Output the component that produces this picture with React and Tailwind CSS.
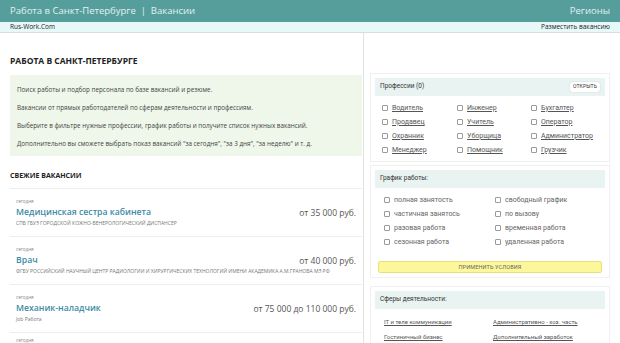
import React from 'react';

const professions = [
  ['Водитель', 'Инженер', 'Бухгалтер'],
  ['Продавец', 'Учитель', 'Оператор'],
  ['Охранник', 'Уборщица', 'Администратор'],
  ['Менеджер', 'Помощник', 'Грузчик'],
];

const schedule = [
  ['полная занятость', 'свободный график'],
  ['частичная занятось', 'по вызову'],
  ['разовая работа', 'временная работа'],
  ['сезонная работа', 'удаленная работа'],
];

const spheres = [
  ['IT и теле коммуникации', 'Административно - хоз. часть'],
  ['Гостиничный бизнес', 'Дополнительный заработок'],
];

const vacancies = [
  { title: 'Медицинская сестра кабинета', price: 'от 35 000 руб.', company: 'СПБ ГБУЗ ГОРОДСКОЙ КОЖНО-ВЕНЕРОЛОГИЧЕСКИЙ ДИСПАНСЕР' },
  { title: 'Врач', price: 'от 40 000 руб.', company: 'ФГБУ РОССИЙСКИЙ НАУЧНЫЙ ЦЕНТР РАДИОЛОГИИ И ХИРУРГИЧЕСКИХ ТЕХНОЛОГИЙ ИМЕНИ АКАДЕМИКА А.М.ГРАНОВА МЗ РФ' },
  { title: 'Механик-наладчик', price: 'от 75 000 до 110 000 руб.', company: 'Job Работа' },
];

function Box() {
  return <span className="inline-block h-[6px] w-[6px] shrink-0 rounded-[1px] border border-[#9a9a9a] bg-white" />;
}

function SectionHead({ children, button }) {
  return (
    <div className="flex h-[18px] items-center justify-between bg-[#e9f3f1] px-[5px] text-[6.5px] text-[#333]">
      <span>{children}</span>
      {button && (
        <span className="rounded-[2px] bg-white px-[3px] py-[1px] text-[5px] tracking-wide text-[#333] shadow-[0_0_1px_rgba(0,0,0,0.3)]">
          {button}
        </span>
      )}
    </div>
  );
}

export default function App() {
  return (
    <div className="h-screen w-full overflow-hidden bg-white font-['Open_Sans',sans-serif]">
      {/* top bar */}
      <div className="flex h-[22px] items-center justify-between bg-[#559e9c] px-[10px] text-[9.5px] text-[#e2f1f1]">
        <span>Работа в Санкт-Петербурге&nbsp;&nbsp;|&nbsp;&nbsp;Вакансии</span>
        <span>Регионы</span>
      </div>
      <div className="flex h-[11px] items-center justify-between border-b border-[#d6dede] bg-[#e6f9f8] px-[10px] text-[6.5px] text-[#222]">
        <span>Rus-Work.Com</span>
        <span>Разместить вакансию</span>
      </div>

      <div className="flex">
        {/* left column */}
        <div className="w-[363px] shrink-0 pl-[10px] pr-[1px]">
          <h1 className="mt-[23px] text-[8.5px] font-bold leading-[10px] text-[#222]">РАБОТА В САНКТ-ПЕТЕРБУРГЕ</h1>
          <div className="mt-[9px] flex flex-col gap-[8px] bg-[#eef7ea] px-[7px] pb-[7px] pt-[10px] text-[6.3px] leading-[10px] text-[#444]">
            <p>Поиск работы и подбор персонала по базе вакансий и резюме.</p>
            <p>Вакансии от прямых работодателей по сферам деятельности и профессиям.</p>
            <p>Выберите в фильтре нужные профессии, график работы и получите список нужных вакансий.</p>
            <p>Дополнительно вы сможете выбрать показ вакансий "за сегодня", "за 3 дня", "за неделю" и т. д.</p>
          </div>
          <h2 className="mt-[15px] text-[7px] font-bold leading-[10px] text-[#222]">СВЕЖИЕ ВАКАНСИИ</h2>
          <div className="mt-[7px]">
            {vacancies.map((v) => (
              <div key={v.title} className="border-t border-[#eeeeee] px-[6px] pb-[10px] pt-[10px]">
                <div className="text-[4.6px] leading-[5px] text-[#888]">сегодня</div>
                <div className="mt-[2px] flex h-[14px] items-center justify-between">
                  <span className="text-[8.7px] font-semibold text-[#3d8ba6]">{v.title}</span>
                  <span className="text-[8.5px] text-[#555]">{v.price}</span>
                </div>
                <div className="h-[6px] whitespace-nowrap text-[5px] leading-[6px] text-[#777]">{v.company}</div>
              </div>
            ))}
            <div className="border-t border-[#eeeeee] px-[6px] pt-[5px]">
              <div className="text-[4.6px] leading-[5px] text-[#888]">сегодня</div>
            </div>
          </div>
        </div>

        {/* right column */}
        <div className="flex-1 border-l border-[#e2e2e2] pl-[6px] pr-[10px] pt-[40px] font-['Roboto',sans-serif]">
          <div className="border border-[#f0f0f0] p-[4px]">
            <SectionHead button="ОТКРЫТЬ">Профессии (0)</SectionHead>
            <div className="mt-[5px]">
              {professions.map((row, i) => (
                <div key={i} className="grid h-[14px] grid-cols-[75px_74px_1fr] items-center pl-[7px] text-[7px] text-[#555]">
                  {row.map((p) => (
                    <span key={p} className="flex items-center gap-[4px]">
                      <Box />
                      <span className="underline">{p}</span>
                    </span>
                  ))}
                </div>
              ))}
            </div>
          </div>

          <div className="mt-[3px] border border-[#f0f0f0] p-[4px]">
            <SectionHead>График работы:</SectionHead>
            <div className="mt-[5px]">
              {schedule.map((row, i) => (
                <div key={i} className="grid h-[14px] grid-cols-[111px_1fr] items-center pl-[9px] text-[7px] text-[#666]">
                  {row.map((s) => (
                    <span key={s} className="flex items-center gap-[4px]">
                      <Box />
                      <span>{s}</span>
                    </span>
                  ))}
                </div>
              ))}
            </div>
            <div className="mx-[3px] mt-[12px] flex h-[12px] items-center justify-center rounded-[2px] border border-[#e8e07a] bg-[#fbf79a] text-[5.5px] tracking-wide text-[#666]">
              ПРИМЕНИТЬ УСЛОВИЯ
            </div>
          </div>

          <div className="mt-[8px] border border-[#f0f0f0] p-[4px]">
            <SectionHead>Сферы деятельности:</SectionHead>
            <div className="mt-[5px]">
              {spheres.map((row, i) => (
                <div key={i} className="grid h-[15px] grid-cols-[109px_1fr] items-center pl-[9px] text-[6px] text-[#555]">
                  {row.map((s) => (
                    <span key={s} className="underline">{s}</span>
                  ))}
                </div>
              ))}
            </div>
          </div>
        </div>
      </div>
    </div>
  );
}
